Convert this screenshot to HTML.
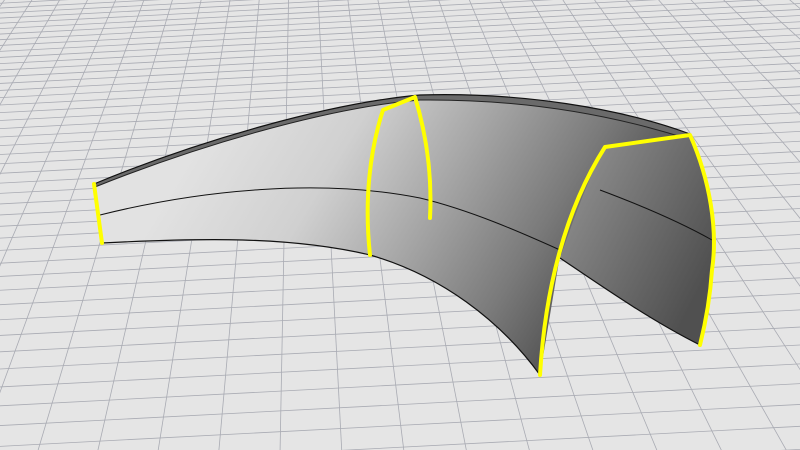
<!DOCTYPE html>
<html><head><meta charset="utf-8"><style>
html,body{margin:0;padding:0;background:#e5e5e5;width:800px;height:450px;overflow:hidden;}
svg{display:block}
</style></head><body>
<svg id="s" width="800" height="450" viewBox="0 0 800 450" xmlns="http://www.w3.org/2000/svg">
<defs>
<linearGradient id="g1" x1="200" y1="140" x2="560" y2="360" gradientUnits="userSpaceOnUse">
<stop offset="0" stop-color="#e2e2e2"/>
<stop offset="0.3" stop-color="#d0d0d0"/>
<stop offset="0.55" stop-color="#a6a6a6"/>
<stop offset="0.8" stop-color="#7a7a7a"/>
<stop offset="1" stop-color="#505050"/>
</linearGradient>
<linearGradient id="g2" x1="560" y1="180" x2="715" y2="260" gradientUnits="userSpaceOnUse">
<stop offset="0" stop-color="#909090"/>
<stop offset="1" stop-color="#505050"/>
</linearGradient>
</defs>
<g id="grid" stroke="#a9abb3" stroke-width="0.8" fill="none"></g>
<path d="M94,184 C200,140 330,103 420,95 C520,92 620,108 690,134 L705,175 C716,230 712,300 700,345 C650,320 600,280 560,255 L540,375 C500,320 440,275 370,255 C290,236 200,238 102,243 Z" fill="url(#g1)"/>
<path d="M94,184 C200,140 330,103 420,95 C520,92 620,108 690,134 L688,139 C610,114 520,99 420,100 C330,107 200,145 95,187 Z" fill="#6a6a6a"/>
<path d="M94,184 C200,140 330,103 420,95 C520,92 620,108 690,134" stroke="#111" stroke-width="1.2" fill="none"/>
<path d="M95,187 C200,145 330,107 420,100 C520,99 610,114 688,139" stroke="#222" stroke-width="1" fill="none"/>
<path d="M605,147 L690,135 C705,170 716,220 712,270 C710,300 705,325 700,345 C650,320 600,285 560,258 C575,215 590,175 605,147 Z" fill="url(#g2)"/>
<path d="M100,215 C200,190 320,178 420,198 C470,210 520,232 560,250" stroke="#111" stroke-width="1" fill="none"/>
<path d="M600,190 C640,205 680,222 712,240" stroke="#111" stroke-width="1" fill="none"/>
<path d="M102,243 C200,238 290,236 370,255 C440,275 500,320 540,375" stroke="#111" stroke-width="1.2" fill="none"/>
<path d="M560,258 C600,285 650,320 700,345" stroke="#111" stroke-width="1.2" fill="none"/>
<g stroke="#ffff00" stroke-width="4" fill="none" stroke-linecap="round" stroke-linejoin="round">
<path d="M94,184 L102,243"/>
<path d="M370,255 C364,200 370,150 383,110 L415,97 C428,140 432,180 430,218"/>
<path d="M540,375 C545,290 565,210 605,147 L690,135 C710,180 718,230 712,270 C710,300 705,325 700,345"/>
</g>
</svg>
<script>
(function(){
var g=document.getElementById('grid'),ns='http://www.w3.org/2000/svg';
var yh=-420, vx=330, ang=-3*Math.PI/180, D=450-yh;
function rot(x,y){var cx=400,cy=225,dx=x-cx,dy=y-cy;return [cx+dx*Math.cos(ang)-dy*Math.sin(ang),cy+dx*Math.sin(ang)+dy*Math.cos(ang)];}
function line(a,b,c,d){var p=rot(a,b),q=rot(c,d);var l=document.createElementNS(ns,'line');l.setAttribute('x1',p[0]);l.setAttribute('y1',p[1]);l.setAttribute('x2',q[0]);l.setAttribute('y2',q[1]);g.appendChild(l);}
var c=22/Math.pow(D,2), y=470;
while(y>-60){line(-200,y,1000,y);y-=c*Math.pow(y-yh,2);}
for(var i=-40;i<=40;i++){var xb=vx+i*62; line(vx+(xb-vx)*(-60-yh)/D,-60,vx+(xb-vx)*(520-yh)/D,520);}
})();
</script>
</body></html>
